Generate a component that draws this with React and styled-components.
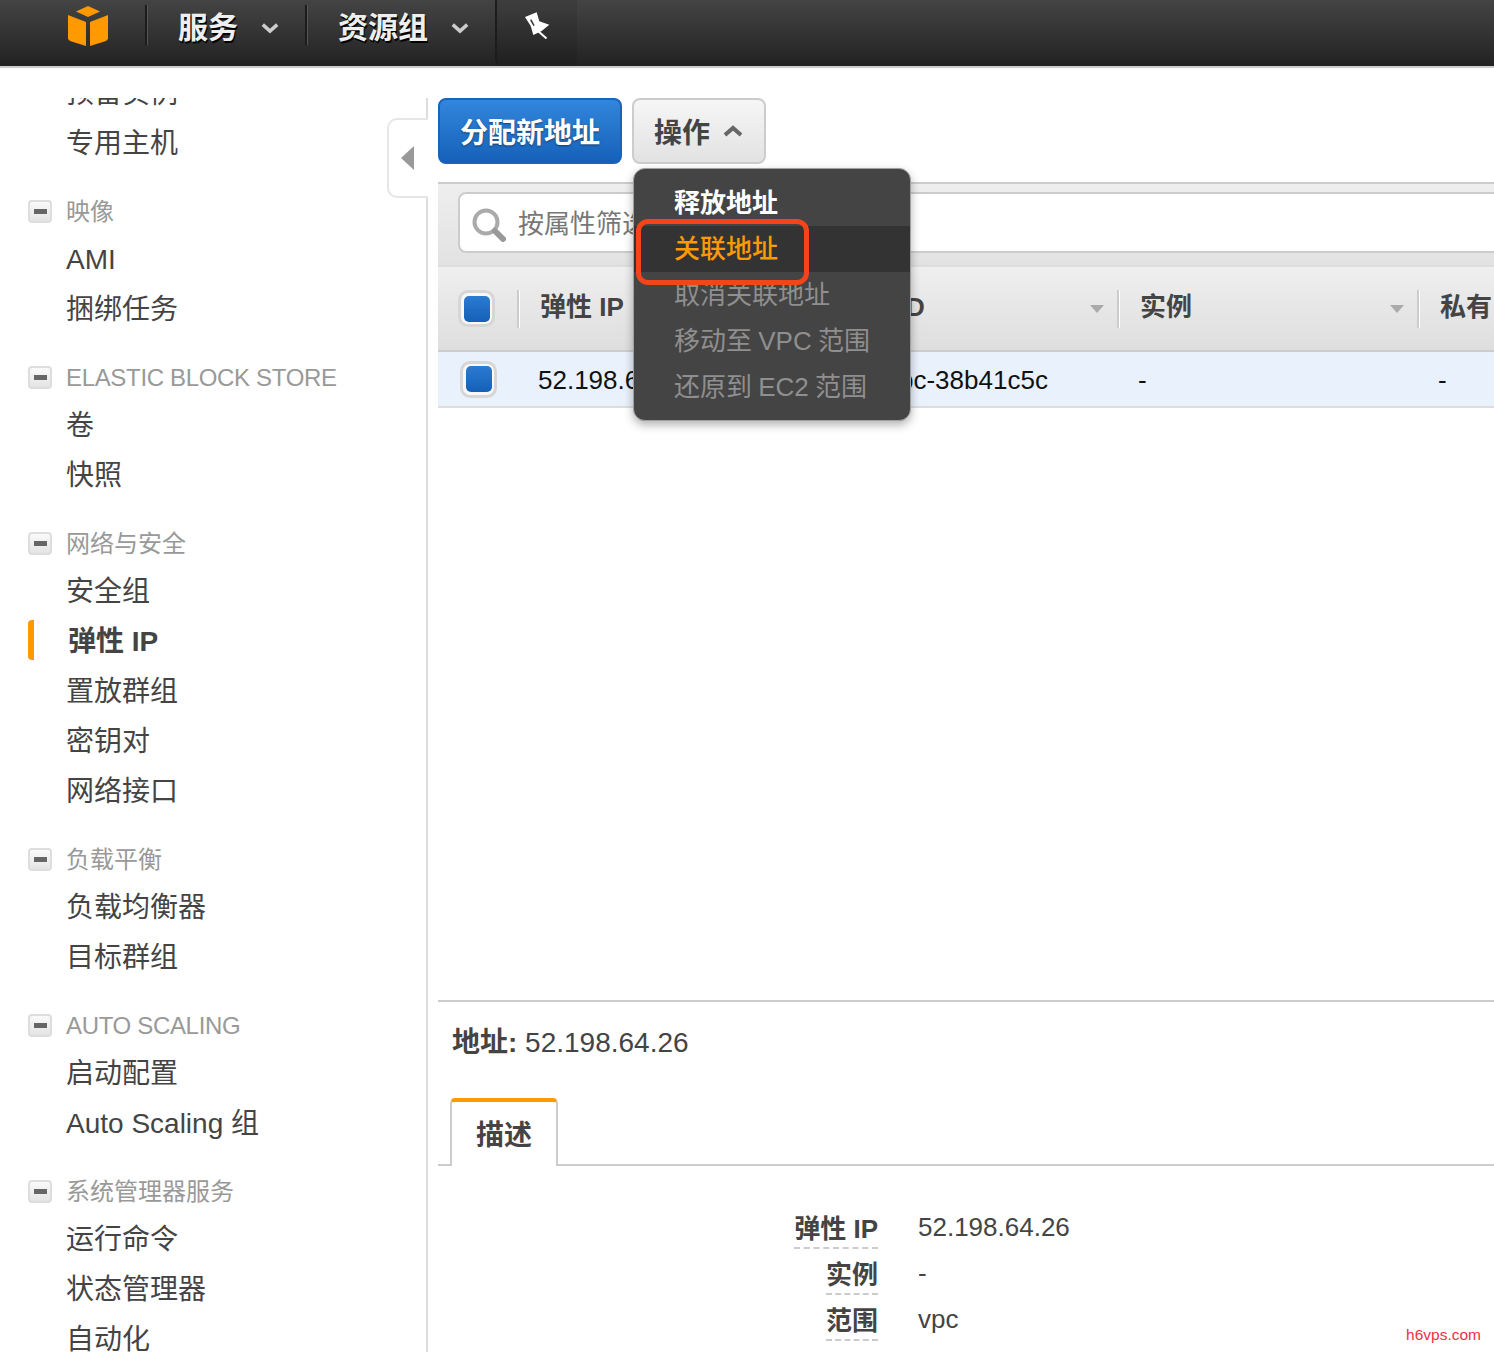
import React from "react";
import styled, { createGlobalStyle } from "styled-components";

const FONT = `"Liberation Sans", "Noto Sans CJK SC", sans-serif`;

const NAV_GROUPS = [
  { items: ["预留实例", "专用主机"] },
  { title: "映像", items: ["AMI", "捆绑任务"] },
  { title: "ELASTIC BLOCK STORE", latin: true, items: ["卷", "快照"] },
  { title: "网络与安全", items: ["安全组", "弹性 IP", "置放群组", "密钥对", "网络接口"] },
  { title: "负载平衡", items: ["负载均衡器", "目标群组"] },
  { title: "AUTO SCALING", latin: true, items: ["启动配置", "Auto Scaling 组"] },
  { title: "系统管理器服务", items: ["运行命令", "状态管理器", "自动化"] }
];

const MENU_ITEMS = [
  { label: "释放地址", kind: "enabled" },
  { label: "关联地址", kind: "active" },
  { label: "取消关联地址", kind: "disabled" },
  { label: "移动至 VPC 范围", kind: "disabled" },
  { label: "还原到 EC2 范围", kind: "disabled" }
];

const DETAILS = [
  { label: "弹性 IP", value: "52.198.64.26" },
  { label: "实例", value: "-" },
  { label: "范围", value: "vpc" }
];

const Chevron = ({ up, color, width = 20 }) => (
  <svg width={width} height={width * 0.7} viewBox="0 0 20 14">
    <path
      d={up ? "M2 11 L10 4 L18 11" : "M2 3 L10 10 L18 3"}
      fill="none"
      stroke={color}
      strokeWidth="4"
    />
  </svg>
);

const Logo = () => (
  <svg width="40" height="40" viewBox="0 0 40 40">
    <path d="M20 0 L32 5.5 L20 11 L8 5.5 Z" fill="#f90" />
    <path d="M0 9 L18 16 L18 40 L2 35 L0 33 Z" fill="#f90" />
    <path d="M40 9 L22 16 L22 40 L38 35 L40 33 Z" fill="#f90" />
  </svg>
);

const PinIcon = () => (
  <svg width="25" height="27" viewBox="0 0 25 27">
    <path d="M13 19 L21.5 26.5" stroke="#fff" strokeWidth="2" />
    <path d="M0 5 L11.7 0.3 L14.3 9.3 L24.3 12.7 L16.7 19 L8.3 23 L5.7 14 Z" fill="#fff" />
    <path d="M5.7 7.7 L9 13.7" stroke="#333" strokeWidth="1.5" />
  </svg>
);

const SearchIcon = () => (
  <svg width="34" height="34" viewBox="0 0 34 34">
    <circle cx="14" cy="14" r="11.5" fill="none" stroke="#aaa" strokeWidth="4" />
    <path d="M23 23 L31 31" stroke="#999" strokeWidth="6" strokeLinecap="round" />
  </svg>
);

export default function App() {
  return (
    <Page>
      <GlobalStyle />
      <TopBar>
        <LogoSlot>
          <Logo />
        </LogoSlot>
        <TopMenu $width={160}>
          <TopLabel>服务</TopLabel>
          <Chevron color="#ccc" width={18} />
        </TopMenu>
        <TopMenu $width={190}>
          <TopLabel>资源组</TopLabel>
          <Chevron color="#ccc" width={18} />
        </TopMenu>
        <PinSlot>
          <PinIcon />
        </PinSlot>
      </TopBar>
      <Body>
        <Sidebar>
          <NavScroll>
            {NAV_GROUPS.map((group, i) => (
              <NavGroup key={i}>
                {group.title && (
                  <GroupHead $latin={group.latin}>
                    <MinusBox />
                    {group.title}
                  </GroupHead>
                )}
                {group.items.map(item => (
                  <NavItem key={item} $active={item === "弹性 IP"}>
                    {item}
                  </NavItem>
                ))}
              </NavGroup>
            ))}
          </NavScroll>
          <CollapseTab>
            <CollapseArrow />
          </CollapseTab>
        </Sidebar>
        <Main>
          <Toolbar>
            <PrimaryButton>分配新地址</PrimaryButton>
            <ActionsWrap>
              <ActionsButton>
                操作
                <Chevron up color="#666" />
              </ActionsButton>
              <Menu>
                {MENU_ITEMS.map(item => (
                  <MenuItem key={item.label} $kind={item.kind}>
                    {item.label}
                  </MenuItem>
                ))}
                <Annotation />
              </Menu>
            </ActionsWrap>
          </Toolbar>
          <FilterBand>
            <FilterInput>
              <SearchIcon />
              按属性筛选或按关键字搜索
            </FilterInput>
          </FilterBand>
          <HeadRow>
            <CheckCell>
              <Check />
            </CheckCell>
            <HeadCell>弹性 IP</HeadCell>
            <HeadCell $sorted $indent={19}>
              VPC ID
            </HeadCell>
            <HeadCell $sorted>实例</HeadCell>
            <HeadCell>私有 IP 地址</HeadCell>
          </HeadRow>
          <DataRow>
            <CheckCell $shift>
              <Check />
            </CheckCell>
            <DataCell>52.198.64.26</DataCell>
            <DataCell $indent={69}>vpc-38b41c5c</DataCell>
            <DataCell>-</DataCell>
            <DataCell>-</DataCell>
          </DataRow>
          <Spacer />
          <DetailPanel>
            <AddressLine>
              <b>地址:</b> 52.198.64.26
            </AddressLine>
            <TabStrip>
              <Tab>描述</Tab>
            </TabStrip>
            <DetailGrid>
              {DETAILS.map(row => (
                <React.Fragment key={row.label}>
                  <DetailLabel>
                    <span>{row.label}</span>
                  </DetailLabel>
                  <DetailValue>{row.value}</DetailValue>
                </React.Fragment>
              ))}
            </DetailGrid>
          </DetailPanel>
        </Main>
      </Body>
      <Watermark>h6vps.com</Watermark>
    </Page>
  );
}

const GlobalStyle = createGlobalStyle`
  html, body {
    margin: 0;
    padding: 0;
    background: #fff;
    font-family: ${FONT};
  }
  * {
    box-sizing: border-box;
  }
`;

const Page = styled.div`
  position: relative;
  width: 1494px;
  height: 1352px;
  overflow: hidden;
  line-height: 1.2;
  color: #444;
`;

const TopBar = styled.div`
  display: flex;
  align-items: center;
  height: 68px;
  padding-bottom: 2px;
  background: linear-gradient(#444, #222);
  border-bottom: 2px solid #ccc;
`;

const LogoSlot = styled.div`
  display: flex;
  width: 145px;
  height: 40px;
  padding-left: 68px;
  margin-top: -12px;
`;

const TopMenu = styled.div`
  display: flex;
  align-items: center;
  justify-content: space-between;
  width: ${p => p.$width}px;
  height: 40px;
  margin-top: -14px;
  padding: 0 26px 0 31px;
  border-left: 2px solid #1c1c1c;
  box-shadow: inset 1px 0 0 #555;

  svg {
    margin-top: 6px;
  }
`;

const TopLabel = styled.span`
  margin-top: 6px;
  font-size: 30px;
  font-weight: bold;
  color: #eee;
  text-shadow: 1px 2px 0 #000;
`;

const PinSlot = styled.div`
  display: flex;
  align-items: center;
  justify-content: center;
  width: 82px;
  height: 66px;
  padding-bottom: 14px;
  border-left: 2px solid #1c1c1c;
  border-radius: 0 0 6px 6px;
  background: rgba(0, 0, 0, 0.08);
`;

const Body = styled.div`
  display: flex;
  height: 1284px;
  padding-top: 30px;
`;

const Sidebar = styled.div`
  position: relative;
  flex: none;
  width: 428px;
  border-right: 2px solid #ddd;
`;

const NavScroll = styled.div`
  height: 100%;
  overflow: hidden;
  padding-left: 28px;

  & > div:first-child {
    margin-top: -31px;
  }
`;

const NavGroup = styled.div`
  margin-bottom: 22px;
`;

const GroupHead = styled.div`
  display: flex;
  align-items: center;
  gap: 14px;
  height: 44px;
  padding-top: 2px;
  font-size: 24px;
  letter-spacing: ${p => (p.$latin ? "-0.33px" : "0")};
  color: #999;
  white-space: nowrap;
`;

const MinusBox = styled.span`
  display: flex;
  align-items: center;
  justify-content: center;
  width: 24px;
  height: 23px;
  margin-top: -1px;
  border: 2px solid #ddd;
  border-radius: 4px;
  background: linear-gradient(#fafafa, #e4e4e4);

  &::after {
    content: "";
    width: 13px;
    height: 5px;
    background: #666;
  }
`;

const NavItem = styled.div`
  position: relative;
  display: flex;
  align-items: center;
  height: 50px;
  padding-top: 3px;
  padding-left: ${p => (p.$active ? 40 : 38)}px;
  font-size: 28px;
  font-weight: ${p => (p.$active ? "bold" : "normal")};
  color: #444;
  white-space: nowrap;

  &::before {
    content: "";
    display: ${p => (p.$active ? "block" : "none")};
    position: absolute;
    left: 0;
    top: 5px;
    width: 6px;
    height: 40px;
    border-radius: 4px 0 0 4px;
    background: #f90;
  }
`;

const CollapseTab = styled.div`
  position: absolute;
  top: 20px;
  right: -2px;
  display: flex;
  align-items: center;
  justify-content: center;
  width: 41px;
  height: 80px;
  padding-right: 3px;
  background: #fff;
  border: 2px solid #e6e6e6;
  border-right: none;
  border-radius: 10px 0 0 10px;
`;

const CollapseArrow = styled.span`
  width: 0;
  height: 0;
  border-style: solid;
  border-width: 12px 13px 12px 0;
  border-color: transparent #999 transparent transparent;
`;

const Main = styled.div`
  display: flex;
  flex: 1;
  min-width: 0;
  flex-direction: column;
  padding-left: 10px;
`;

const Toolbar = styled.div`
  display: flex;
  flex: none;
  gap: 10px;
  height: 66px;
  margin-bottom: 18px;
`;

const PrimaryButton = styled.div`
  display: flex;
  align-items: center;
  justify-content: center;
  width: 184px;
  padding-top: 5px;
  border: 2px solid #1a63b8;
  border-radius: 8px;
  background: linear-gradient(#3286dc, #1561b9);
  font-size: 28px;
  font-weight: bold;
  color: #fff;
  text-shadow: 0 1px 2px rgba(0, 0, 0, 0.45);
`;

const ActionsWrap = styled.div`
  position: relative;
  width: 134px;
`;

const ActionsButton = styled.div`
  display: flex;
  align-items: center;
  justify-content: space-between;
  height: 100%;
  padding: 5px 21px 0 20px;
  border: 2px solid #ccc;
  border-radius: 8px;
  background: linear-gradient(#f6f6f6, #e2e2e2);
  font-size: 28px;
  font-weight: bold;
  color: #444;

  svg {
    margin-top: -5px;
  }
`;

const Menu = styled.div`
  position: absolute;
  z-index: 5;
  top: 70px;
  left: 1px;
  width: 278px;
  height: 253px;
  padding-top: 11px;
  border: 1px solid #a0a0a0;
  border-radius: 12px;
  background: #444;
  box-shadow: 0 4px 10px rgba(0, 0, 0, 0.3);
`;

const MENU_COLORS = { enabled: "#fff", active: "#f90", disabled: "#8f8f8f" };
const MENU_WEIGHTS = { enabled: "bold", active: 500, disabled: "normal" };

const MenuItem = styled.div`
  display: flex;
  align-items: center;
  height: 46px;
  padding-top: 2px;
  padding-left: 40px;
  background: ${p => (p.$kind === "active" ? "#333" : "transparent")};
  font-size: 26px;
  font-weight: ${p => MENU_WEIGHTS[p.$kind]};
  word-spacing: -1px;
  color: ${p => MENU_COLORS[p.$kind]};
  white-space: nowrap;
`;

const Annotation = styled.div`
  position: absolute;
  top: 50px;
  left: 2px;
  width: 173px;
  height: 66px;
  border: 5px solid #f4441a;
  border-radius: 12px;
`;

const FilterBand = styled.div`
  flex: none;
  height: 85px;
  padding: 8px 0 0 20px;
  overflow: hidden;
  border-top: 2px solid #ccc;
  border-bottom: 2px solid #ddd;
  background: linear-gradient(#eee, #e2e2e2);
`;

const FilterInput = styled.div`
  display: flex;
  align-items: center;
  gap: 12px;
  width: 1100px;
  height: 61px;
  padding: 4px 0 0 12px;
  border: 2px solid #ccc;
  border-radius: 8px 0 0 8px;
  background: #fff;
  font-size: 26px;
  color: #777;
  white-space: nowrap;
`;

const COLUMNS = "79px 300px 300px 300px 1fr";

const HeadRow = styled.div`
  display: grid;
  flex: none;
  grid-template-columns: ${COLUMNS};
  align-items: center;
  height: 85px;
  overflow: hidden;
  border-bottom: 2px solid #ccc;
  background: linear-gradient(#efefef, #dedede);
`;

const CheckCell = styled.div`
  padding-left: ${p => (p.$shift ? 22 : 20)}px;
`;

const Check = styled.div`
  display: flex;
  align-items: center;
  justify-content: center;
  width: 37px;
  height: 37px;
  border: 3px solid #d6d6d6;
  border-radius: 10px;
  background: #f8f8f8;

  &::after {
    content: "";
    width: 26px;
    height: 26px;
    border-radius: 5px;
    background: linear-gradient(#2b7bd3, #1560b7);
  }
`;

const HeadCell = styled.div`
  position: relative;
  display: flex;
  align-items: center;
  height: 38px;
  padding: 0 0 2px ${p => p.$indent || 21}px;
  border-left: 2px solid #ccc;
  box-shadow: inset 1px 0 0 #fff;
  font-size: 26px;
  font-weight: bold;
  color: #444;
  white-space: nowrap;

  &::after {
    content: "";
    display: ${p => (p.$sorted ? "block" : "none")};
    position: absolute;
    right: 13px;
    top: 15px;
    border-style: solid;
    border-width: 8px 7px 0 7px;
    border-color: #aaa transparent transparent transparent;
  }
`;

const DataRow = styled.div`
  display: grid;
  flex: none;
  grid-template-columns: ${COLUMNS};
  align-items: center;
  height: 56px;
  border-bottom: 2px solid #ddd;
  background: #e9f1fc;
`;

const DataCell = styled.div`
  padding: 3px 0 0 ${p => p.$indent || 21}px;
  font-size: 26px;
  color: #111;
  white-space: nowrap;
`;

const Spacer = styled.div`
  flex: 1;
`;

const DetailPanel = styled.div`
  flex: none;
  height: 352px;
  border-top: 2px solid #ccc;
`;

const AddressLine = styled.div`
  height: 96px;
  padding: 25px 0 0 14px;
  font-size: 28px;
  line-height: 32px;
  color: #444;
`;

const TabStrip = styled.div`
  display: flex;
  height: 68px;
  padding-left: 12px;
  border-bottom: 2px solid #ccc;
`;

const Tab = styled.div`
  display: flex;
  align-items: center;
  justify-content: center;
  width: 108px;
  height: 68px;
  padding-top: 4px;
  border: 2px solid #ccc;
  border-top: 4px solid #f90;
  border-bottom: none;
  border-radius: 5px 5px 0 0;
  background: #fff;
  font-size: 28px;
  font-weight: bold;
  color: #444;
`;

const DetailGrid = styled.div`
  display: grid;
  grid-template-columns: 440px 1fr;
  grid-auto-rows: 46px;
  column-gap: 40px;
  padding-top: 38px;
`;

const DetailLabel = styled.div`
  display: flex;
  justify-content: flex-end;
  font-size: 26px;
  font-weight: bold;
  color: #444;

  span {
    height: 45px;
    line-height: 50px;
    border-bottom: 2px dashed #ccc;
  }
`;

const DetailValue = styled.div`
  font-size: 26px;
  line-height: 46px;
  color: #444;
`;

const Watermark = styled.div`
  position: absolute;
  right: 13px;
  bottom: 7px;
  font-size: 15.5px;
  color: #f0303e;
`;
